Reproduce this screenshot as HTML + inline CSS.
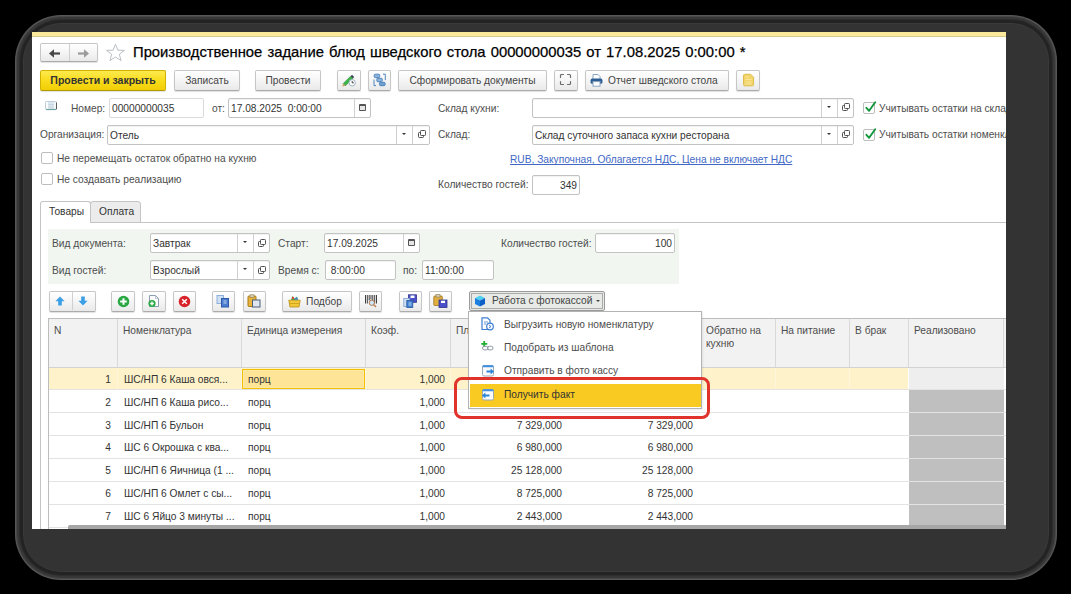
<!DOCTYPE html>
<html><head><meta charset="utf-8">
<style>
*{box-sizing:border-box;margin:0;padding:0}
html,body{width:1071px;height:594px;background:#000;overflow:hidden;font-family:"Liberation Sans",sans-serif;font-size:10.2px;color:#4d4d4d}
.a{position:absolute}
#sh1{left:15px;top:15px;width:1042px;height:565px;border-radius:46px;background:#575757}
#sh2{left:16px;top:16px;width:1040px;height:563px;border-radius:45px;background:#484848}
#sh3{left:17px;top:17px;width:1038px;height:561px;border-radius:44px;background:#373737}
#sh4{left:19px;top:19px;width:1034px;height:557px;border-radius:42px;background:#2e2e2e}
#sh5{left:20px;top:20px;width:1032px;height:555px;border-radius:41px;background:#232323}
#sh6{left:23px;top:23px;width:1026px;height:549px;border-radius:38px;background:#3a3a3a}
#sh7{left:24px;top:24px;width:1024px;height:547px;border-radius:37px;background:#333333}
#clip{left:32px;top:32px;width:974px;height:497px;overflow:hidden;background:#fff}
#pg{left:-32px;top:-32px;width:1071px;height:594px}
.t{position:absolute;white-space:nowrap;line-height:12px;height:12px;margin-top:0.6px}
.btn{position:absolute;height:21px;top:70px;border:1px solid #c6c6c6;border-bottom-color:#ababab;border-radius:2px;background:linear-gradient(#ffffff,#f4f4f4 55%,#e9e9e9);box-shadow:0 1px 1px rgba(0,0,0,.12);color:#444;text-align:center;line-height:19px;white-space:nowrap}
.inp{position:absolute;height:20px;border:1px solid #c3c3c3;border-radius:2px;background:#fff;box-shadow:inset 0 1px 1px rgba(0,0,0,.06);color:#333;line-height:19px;padding-left:2px;white-space:nowrap;overflow:hidden}
.div{position:absolute;top:0;bottom:0;width:1px;background:#d0d0d0}
.th{position:absolute;white-space:nowrap;line-height:12.5px;color:#4d4d4d}
.td{position:absolute;white-space:nowrap;line-height:12px;color:#333}

.dd{position:absolute;width:0;height:0;border-left:2.5px solid transparent;border-right:2.5px solid transparent;border-top:2.5px solid #333}
.op{position:absolute;width:9px;height:8px}
.op:before{content:"";position:absolute;left:3px;top:0;width:5px;height:5px;border:1px solid #606060;border-radius:1px;background:#fff}
.op:after{content:"";position:absolute;left:0;top:3px;width:5px;height:5px;border:1px solid #606060;border-radius:1px;border-top-color:transparent;border-right-color:transparent}
.cal{position:absolute;width:7px;height:7px;border:1px solid #555;border-top-width:2px;border-radius:1px;background:#e6e6e6}
.mi{position:absolute;left:504px;white-space:nowrap;line-height:12px;color:#4d4d4d}
.cb{position:absolute;width:12px;height:12px;border:1px solid #bdbdbd;border-radius:2px;background:#fff}
</style></head><body>
<div class="a" id="sh1"></div>
<div class="a" id="sh2"></div>
<div class="a" id="sh3"></div>
<div class="a" id="sh4"></div>
<div class="a" id="sh5"></div>
<div class="a" id="sh6"></div>
<div class="a" id="sh7"></div>
<div class="a" id="clip"><div class="a" id="pg">
  <!-- top yellow band -->
  <div class="a" style="left:0;top:32px;width:1071px;height:5px;background:linear-gradient(#fbe99c 0,#fbe99c 78%,#d8ca8a 82%,#d8ca8a 100%)"></div>

  <!-- nav -->
  <div class="btn" style="left:40px;top:43px;width:58px;height:19px"></div>
  <div class="a" style="left:69px;top:44px;width:1px;height:17px;background:#d0d0d0"></div>
  <!-- star -->
  <!-- title -->
  <div class="t" style="left:133px;top:42.5px;font-size:14.8px;word-spacing:1px;line-height:18px;height:18px;color:#000;-webkit-text-stroke:0.25px #000">Производственное задание блюд шведского стола 00000000035 от 17.08.2025 0:00:00 *</div>

  <!-- command bar -->
  <div class="btn" style="left:40px;width:126px;background:linear-gradient(#fde94f,#f9dc1c 50%,#f1ce07);border-color:#d0b200;border-bottom-color:#b39a00;color:#333;font-weight:bold;font-size:10.5px">Провести и закрыть</div>
  <div class="btn" style="left:174px;width:66px">Записать</div>
  <div class="btn" style="left:255px;width:66px">Провести</div>
  <div class="btn" style="left:337px;width:24px"></div>
  <div class="btn" style="left:368px;width:23px"></div>
  <div class="btn" style="left:398px;width:149px">Сформировать документы</div>
  <div class="btn" style="left:554px;width:24px"></div>
  <div class="btn" style="left:585px;width:144px;padding-left:22px;text-align:left">Отчет шведского стола</div>
  <div class="btn" style="left:736px;width:24px"></div>

  <!-- row Номер -->
  <div class="t" style="left:71px;top:102.2px">Номер:</div>
  <div class="inp" style="left:109px;top:98px;width:95px;border-color:#dadada;box-shadow:none">00000000035</div>
  <div class="t" style="left:212px;top:102.2px">от:</div>
  <div class="inp" style="left:228px;top:98px;width:143px">17.08.2025&nbsp; 0:00:00<div class="div" style="left:125px"></div></div>
  <div class="t" style="left:438px;top:102.2px">Склад кухни:</div>
  <div class="inp" style="left:532px;top:98px;width:322px"><div class="div" style="left:288px"></div><div class="div" style="left:304px"></div></div>
  <div class="cb" style="left:863px;top:102px"></div>
  <div class="t" style="left:879px;top:102.2px">Учитывать остатки на складе кухни</div>

  <!-- row Организация -->
  <div class="t" style="left:40px;top:128.4px">Организация:</div>
  <div class="inp" style="left:107px;top:125px;width:323px">Отель<div class="div" style="left:288px"></div><div class="div" style="left:304px"></div></div>
  <div class="t" style="left:438px;top:128.4px">Склад:</div>
  <div class="inp" style="left:532px;top:125px;width:322px">Склад суточного запаса кухни ресторана<div class="div" style="left:288px"></div><div class="div" style="left:304px"></div></div>
  <div class="cb" style="left:863px;top:129px"></div>
  <div class="t" style="left:879px;top:128.4px">Учитывать остатки номенклатуры</div>

  <!-- checkboxes -->
  <div class="cb" style="left:41px;top:152px"></div>
  <div class="t" style="left:57px;top:152.5px">Не перемещать остаток обратно на кухню</div>
  <div class="cb" style="left:41px;top:173px"></div>
  <div class="t" style="left:57px;top:173px">Не создавать реализацию</div>
  <div class="t" style="left:510px;top:153.5px;color:#4168c6;text-decoration:underline;text-decoration-skip-ink:none">RUB, Закупочная, Облагается НДС, Цена не включает НДС</div>

  <div class="t" style="left:438px;top:178.5px">Количество гостей:</div>
  <div class="inp" style="left:532px;top:175px;width:48px;text-align:right;padding-right:2px">349</div>

  <!-- tabs -->
  <div class="a" style="left:40px;top:222px;width:1000px;height:1px;background:#c4c4c4"></div>
  <div class="a" style="left:40px;top:222px;width:1px;height:320px;background:#c4c4c4"></div>
  <div class="a" style="left:90px;top:201px;width:51px;height:22px;border:1px solid #c4c4c4;border-radius:3px 3px 0 0;background:#ececec"></div>
  <div class="a" style="left:40px;top:201px;width:51px;height:22px;border:1px solid #c4c4c4;border-bottom:none;border-radius:3px 3px 0 0;background:#fff"></div>
  <div class="t" style="left:49px;top:205px;color:#333">Товары</div>
  <div class="t" style="left:99px;top:205px;color:#333">Оплата</div>

  <!-- green panel -->
  <div class="a" style="left:48px;top:229px;width:631px;height:55px;background:#f1f6f1"></div>
  <div class="t" style="left:52px;top:237px">Вид документа:</div>
  <div class="inp" style="left:150px;top:233px;width:120px">Завтрак<div class="div" style="left:86px"></div><div class="div" style="left:102px"></div></div>
  <div class="t" style="left:278px;top:237px">Старт:</div>
  <div class="inp" style="left:324px;top:233px;width:96px">17.09.2025<div class="div" style="left:78px"></div></div>
  <div class="t" style="left:501px;top:237px">Количество гостей:</div>
  <div class="inp" style="left:595px;top:233px;width:80px;text-align:right;padding-right:2px">100</div>
  <div class="t" style="left:52px;top:264px">Вид гостей:</div>
  <div class="inp" style="left:150px;top:260px;width:120px">Взрослый<div class="div" style="left:86px"></div><div class="div" style="left:102px"></div></div>
  <div class="t" style="left:278px;top:264px">Время с:</div>
  <div class="inp" style="left:325px;top:260px;width:71px">&nbsp;8:00:00</div>
  <div class="t" style="left:403px;top:264px">по:</div>
  <div class="inp" style="left:422px;top:260px;width:72px">11:00:00</div>

  <!-- toolbar -->
  <div class="btn" style="top:291px;left:49px;width:47px"></div>
  <div class="a" style="left:72px;top:292px;width:1px;height:18px;background:#d0d0d0"></div>
  <div class="btn" style="top:291px;left:111px;width:24px"></div>
  <div class="btn" style="top:291px;left:142px;width:24px"></div>
  <div class="btn" style="top:291px;left:173px;width:23px"></div>
  <div class="btn" style="top:291px;left:212px;width:23px"></div>
  <div class="btn" style="top:291px;left:243px;width:23px"></div>
  <div class="btn" style="top:291px;left:282px;width:70px;padding-left:14px">Подбор</div>
  <div class="btn" style="top:291px;left:359px;width:23px"></div>
  <div class="btn" style="top:291px;left:399px;width:23px"></div>
  <div class="btn" style="top:291px;left:429px;width:23px"></div>
  <div class="btn" style="top:291px;left:469px;width:136px;height:20px;border-color:#9a9a9a;background:#e7eae7;box-shadow:none;text-align:left;padding-left:22px;line-height:18px"><div class="a" style="left:1px;top:1px;right:1px;bottom:1px;border:1px solid #a9aba9"></div>Работа с фотокассой<div class="dd" style="left:126px;top:8px;border-top-color:#444"></div></div>

  <!-- table -->
<!--TABLE-->
<div class="a" style="left:49px;top:319px;width:960px;height:48px;background:#f2f2f2"></div>
<div class="a" style="left:48px;top:318px;width:960px;height:1px;background:#bdbdbd"></div>
<div class="a" style="left:48px;top:318px;width:1px;height:220px;background:#bdbdbd"></div>
<div class="a" style="left:49px;top:367px;width:960px;height:1px;background:#d2d2d2"></div>
<div class="a" style="left:117px;top:319px;width:1px;height:48px;background:#d9d9d9"></div>
<div class="a" style="left:241px;top:319px;width:1px;height:48px;background:#d9d9d9"></div>
<div class="a" style="left:365px;top:319px;width:1px;height:48px;background:#d9d9d9"></div>
<div class="a" style="left:450px;top:319px;width:1px;height:48px;background:#d9d9d9"></div>
<div class="a" style="left:568px;top:319px;width:1px;height:48px;background:#d9d9d9"></div>
<div class="a" style="left:700px;top:319px;width:1px;height:48px;background:#d9d9d9"></div>
<div class="a" style="left:775px;top:319px;width:1px;height:48px;background:#d9d9d9"></div>
<div class="a" style="left:849px;top:319px;width:1px;height:48px;background:#d9d9d9"></div>
<div class="a" style="left:908px;top:319px;width:1px;height:48px;background:#d9d9d9"></div>
<div class="a" style="left:1003px;top:319px;width:1px;height:48px;background:#d9d9d9"></div>
<div class="th" style="left:54px;top:325px">N</div>
<div class="th" style="left:123px;top:325px">Номенклатура</div>
<div class="th" style="left:247px;top:325px">Единица измерения</div>
<div class="th" style="left:371px;top:325px">Коэф.</div>
<div class="th" style="left:456px;top:325px">План</div>
<div class="th" style="left:574px;top:325px">Факт</div>
<div class="th" style="left:706px;top:325px">Обратно на<br>кухню</div>
<div class="th" style="left:781px;top:325px">На питание</div>
<div class="th" style="left:855px;top:325px">В брак</div>
<div class="th" style="left:914px;top:325px">Реализовано</div>
<div class="a" style="left:49px;top:368px;width:859px;height:21px;background:#fdf2c9"></div>
<div class="a" style="left:117px;top:368px;width:1px;height:21px;background:#fff6dc"></div>
<div class="a" style="left:241px;top:368px;width:1px;height:21px;background:#fff6dc"></div>
<div class="a" style="left:365px;top:368px;width:1px;height:21px;background:#fff6dc"></div>
<div class="a" style="left:450px;top:368px;width:1px;height:21px;background:#fff6dc"></div>
<div class="a" style="left:568px;top:368px;width:1px;height:21px;background:#fff6dc"></div>
<div class="a" style="left:700px;top:368px;width:1px;height:21px;background:#fff6dc"></div>
<div class="a" style="left:775px;top:368px;width:1px;height:21px;background:#fff6dc"></div>
<div class="a" style="left:849px;top:368px;width:1px;height:21px;background:#fff6dc"></div>
<div class="a" style="left:909px;top:368px;width:95px;height:21px;background:#eeeeee"></div>
<div class="a" style="left:242px;top:368.5px;width:123px;height:20px;background:#fde497;border:1px solid #f5bf00;box-shadow:inset 0 0 0 1px #fbe9a8"></div>
<div class="a" style="left:49px;top:389.00px;width:960px;height:1px;background:#e3e3e3"></div>
<div class="td r" style="right:960px;top:374.0px">1</div>
<div class="td" style="left:124px;top:374.0px">ШС/НП 6 Каша овся...</div>
<div class="td" style="left:248px;top:374.0px">порц</div>
<div class="td r" style="right:626px;top:374.0px">1,000</div>
<div class="a" style="left:909px;top:390.00px;width:95px;height:22px;background:#bfbfbf"></div>
<div class="a" style="left:49px;top:411.95px;width:960px;height:1px;background:#e3e3e3"></div>
<div class="td r" style="right:960px;top:396.75px">2</div>
<div class="td" style="left:124px;top:396.75px">ШС/НП 6 Каша рисо...</div>
<div class="td" style="left:248px;top:396.75px">порц</div>
<div class="td r" style="right:626px;top:396.75px">1,000</div>
<div class="a" style="left:909px;top:412.95px;width:95px;height:22px;background:#bfbfbf"></div>
<div class="a" style="left:49px;top:434.90px;width:960px;height:1px;background:#e3e3e3"></div>
<div class="td r" style="right:960px;top:419.5px">3</div>
<div class="td" style="left:124px;top:419.5px">ШС/НП 6 Бульон</div>
<div class="td" style="left:248px;top:419.5px">порц</div>
<div class="td r" style="right:626px;top:419.5px">1,000</div>
<div class="td r" style="right:509px;top:419.5px">7 329,000</div>
<div class="td r" style="right:378px;top:419.5px">7 329,000</div>
<div class="a" style="left:909px;top:435.90px;width:95px;height:22px;background:#bfbfbf"></div>
<div class="a" style="left:49px;top:457.85px;width:960px;height:1px;background:#e3e3e3"></div>
<div class="td r" style="right:960px;top:442.25px">4</div>
<div class="td" style="left:124px;top:442.25px">ШС 6 Окрошка с ква...</div>
<div class="td" style="left:248px;top:442.25px">порц</div>
<div class="td r" style="right:626px;top:442.25px">1,000</div>
<div class="td r" style="right:509px;top:442.25px">6 980,000</div>
<div class="td r" style="right:378px;top:442.25px">6 980,000</div>
<div class="a" style="left:909px;top:458.85px;width:95px;height:22px;background:#bfbfbf"></div>
<div class="a" style="left:49px;top:480.80px;width:960px;height:1px;background:#e3e3e3"></div>
<div class="td r" style="right:960px;top:465.0px">5</div>
<div class="td" style="left:124px;top:465.0px">ШС/НП 6 Яичница (1 ...</div>
<div class="td" style="left:248px;top:465.0px">порц</div>
<div class="td r" style="right:626px;top:465.0px">1,000</div>
<div class="td r" style="right:509px;top:465.0px">25 128,000</div>
<div class="td r" style="right:378px;top:465.0px">25 128,000</div>
<div class="a" style="left:909px;top:481.80px;width:95px;height:22px;background:#bfbfbf"></div>
<div class="a" style="left:49px;top:503.75px;width:960px;height:1px;background:#e3e3e3"></div>
<div class="td r" style="right:960px;top:487.75px">6</div>
<div class="td" style="left:124px;top:487.75px">ШС/НП 6 Омлет с сы...</div>
<div class="td" style="left:248px;top:487.75px">порц</div>
<div class="td r" style="right:626px;top:487.75px">1,000</div>
<div class="td r" style="right:509px;top:487.75px">8 725,000</div>
<div class="td r" style="right:378px;top:487.75px">8 725,000</div>
<div class="a" style="left:909px;top:504.75px;width:95px;height:22px;background:#bfbfbf"></div>
<div class="a" style="left:49px;top:526.70px;width:960px;height:1px;background:#e3e3e3"></div>
<div class="td r" style="right:960px;top:510.5px">7</div>
<div class="td" style="left:124px;top:510.5px">ШС 6 Яйцо 3 минуты ...</div>
<div class="td" style="left:248px;top:510.5px">порц</div>
<div class="td r" style="right:626px;top:510.5px">1,000</div>
<div class="td r" style="right:509px;top:510.5px">2 443,000</div>
<div class="td r" style="right:378px;top:510.5px">2 443,000</div>

<!--/TABLE-->





<div class="dd" style="left:826.5px;top:105.5px"></div>
<svg class="a" style="left:842px;top:103px" width="8" height="8" viewBox="0 0 8 8" fill="none" stroke="#505050" stroke-width="1"><rect x="2.5" y="0.5" width="5" height="5" rx="0.8"/><path d="M2 2.5 H1.3 Q0.5 2.5 0.5 3.3 V6.7 Q0.5 7.5 1.3 7.5 H4.7 Q5.5 7.5 5.5 6.7 V6"/></svg>
<div class="dd" style="left:826.5px;top:132.5px"></div>
<svg class="a" style="left:842px;top:130px" width="8" height="8" viewBox="0 0 8 8" fill="none" stroke="#505050" stroke-width="1"><rect x="2.5" y="0.5" width="5" height="5" rx="0.8"/><path d="M2 2.5 H1.3 Q0.5 2.5 0.5 3.3 V6.7 Q0.5 7.5 1.3 7.5 H4.7 Q5.5 7.5 5.5 6.7 V6"/></svg>
<div class="dd" style="left:402px;top:132.5px"></div>
<svg class="a" style="left:417.5px;top:130px" width="8" height="8" viewBox="0 0 8 8" fill="none" stroke="#505050" stroke-width="1"><rect x="2.5" y="0.5" width="5" height="5" rx="0.8"/><path d="M2 2.5 H1.3 Q0.5 2.5 0.5 3.3 V6.7 Q0.5 7.5 1.3 7.5 H4.7 Q5.5 7.5 5.5 6.7 V6"/></svg>
<div class="dd" style="left:242.5px;top:240.5px"></div>
<svg class="a" style="left:258px;top:238.5px" width="8" height="8" viewBox="0 0 8 8" fill="none" stroke="#505050" stroke-width="1"><rect x="2.5" y="0.5" width="5" height="5" rx="0.8"/><path d="M2 2.5 H1.3 Q0.5 2.5 0.5 3.3 V6.7 Q0.5 7.5 1.3 7.5 H4.7 Q5.5 7.5 5.5 6.7 V6"/></svg>
<div class="dd" style="left:242.5px;top:267.5px"></div>
<svg class="a" style="left:258px;top:265.5px" width="8" height="8" viewBox="0 0 8 8" fill="none" stroke="#505050" stroke-width="1"><rect x="2.5" y="0.5" width="5" height="5" rx="0.8"/><path d="M2 2.5 H1.3 Q0.5 2.5 0.5 3.3 V6.7 Q0.5 7.5 1.3 7.5 H4.7 Q5.5 7.5 5.5 6.7 V6"/></svg>
<div class="cal" style="left:359px;top:104px"></div>
<div class="cal" style="left:408px;top:239px"></div>
<svg class="a" style="left:864px;top:100px" width="14" height="14" viewBox="0 0 14 14"><path d="M2.4 7.8 L5.1 10.8 L11.2 2.2" fill="none" stroke="#12963c" stroke-width="1.9" stroke-linecap="round" stroke-linejoin="round"/></svg>
<svg class="a" style="left:864px;top:127px" width="14" height="14" viewBox="0 0 14 14"><path d="M2.4 7.8 L5.1 10.8 L11.2 2.2" fill="none" stroke="#12963c" stroke-width="1.9" stroke-linecap="round" stroke-linejoin="round"/></svg>
<svg class="a" style="left:48px;top:47.5px" width="14" height="11" viewBox="0 0 14 11"><path d="M12 5.5 H4" stroke="#474747" stroke-width="2.2"/><path d="M1 5.5 L6 1.2 V9.8 Z" fill="#474747"/></svg>
<svg class="a" style="left:76px;top:47.5px" width="14" height="11" viewBox="0 0 14 11"><path d="M2 5.5 H10" stroke="#9b9b9b" stroke-width="2.2"/><path d="M13 5.5 L8 1.2 V9.8 Z" fill="#9b9b9b"/></svg>
<svg class="a" style="left:105px;top:43px" width="21" height="19" viewBox="0 0 21 19"><path d="M10.5 1.2 L12.9 7.2 L19.4 7.4 L14.3 11.3 L16.1 17.6 L10.5 14 L4.9 17.6 L6.7 11.3 L1.6 7.4 L8.1 7.2 Z" fill="none" stroke="#b9bec4" stroke-width="1"/></svg>
<svg class="a" style="left:340px;top:72px" width="18" height="16" viewBox="0 0 18 16">
<path d="M3.2 11.6 L10.6 4.2 L12.8 6.4 L5.4 13.8 Z" fill="#3cb54a" stroke="#2f8a3a" stroke-width=".6"/>
<path d="M10.6 4.2 L12 2.8 L14.2 5 L12.8 6.4 Z" fill="#3b4656"/>
<path d="M3.2 11.6 L5.4 13.8 L2.2 14.6 Z" fill="#c8a060"/>
<circle cx="12.2" cy="10.8" r="3.2" fill="#fff" stroke="#9fb2c4" stroke-width="1"/>
<path d="M12.2 9 V10.9 H13.8" fill="none" stroke="#333" stroke-width=".9"/>
</svg>
<svg class="a" style="left:373px;top:73px" width="14" height="14" viewBox="0 0 14 14">
<rect x="1.2" y="1.2" width="5.5" height="3.4" rx="1" fill="#8fb6da" stroke="#4f86bf" stroke-width="1"/>
<rect x="3.8" y="5.3" width="5.5" height="3.4" rx="1" fill="#8fb6da" stroke="#4f86bf" stroke-width="1"/>
<rect x="6.5" y="9.3" width="5.6" height="3.4" rx="1" fill="#6e9fcf" stroke="#4f86bf" stroke-width="1"/>
<path d="M1 6.5 V12.6 H3" fill="none" stroke="#4f86bf" stroke-width="1"/>
<path d="M10 1.2 H12.3 V7.2" fill="none" stroke="#4f86bf" stroke-width="1"/>
</svg>
<svg class="a" style="left:559px;top:73px" width="13" height="13" viewBox="0 0 13 13" fill="none" stroke="#6e6e6e" stroke-width="1.2" stroke-linecap="round">
<path d="M1.5 4.5 V2.5 Q1.5 1.5 2.5 1.5 H4.5"/><path d="M8.5 1.5 H10.5 Q11.5 1.5 11.5 2.5 V4.5"/>
<path d="M11.5 8.5 V10.5 Q11.5 11.5 10.5 11.5 H8.5"/><path d="M4.5 11.5 H2.5 Q1.5 11.5 1.5 10.5 V8.5"/>
</svg>
<svg class="a" style="left:590px;top:73px" width="13" height="14" viewBox="0 0 13 14">
<path d="M3 6 V1.5 H8 L10 3.5 V6" fill="#fff" stroke="#8aa4bf" stroke-width="1"/>
<rect x="0.6" y="5.6" width="11.8" height="5.2" rx="1.6" fill="#2d5f95"/>
<rect x="3" y="8.6" width="7" height="4.6" fill="#fff" stroke="#8aa4bf" stroke-width="1"/>
</svg>
<svg class="a" style="left:742px;top:73px" width="13" height="14" viewBox="0 0 13 14">
<path d="M1.5 2.5 Q1.5 1.3 2.7 1.3 H8.6 L11.6 4.3 V11.6 Q11.6 12.8 10.4 12.8 H2.7 Q1.5 12.8 1.5 11.6 Z" fill="#f2d56a" stroke="#dcbc4c" stroke-width="1"/>
<path d="M3.5 4 H7 M3.5 6.5 H9.5 M3.5 9 H9.5 M3.5 11 H9.5" stroke="#fbe9a8" stroke-width=".8"/>
</svg>
<svg class="a" style="left:45px;top:101px" width="13" height="10" viewBox="0 0 13 10">
<rect x="0.5" y="0.5" width="11" height="8" rx="1" fill="#dde7ef" stroke="#bfcddb" stroke-width="1"/>
<rect x="1" y="1" width="2" height="7.5" fill="#fafcfd"/><rect x="9" y="1" width="2" height="7" fill="#f5f8fb"/>
<path d="M3.5 3.5 H9 M3.5 6 H9" stroke="#c3cfda" stroke-width=".8"/>
<path d="M1 8.5 H11" stroke="#6fa2a2" stroke-width="1.2"/><path d="M11.5 1.5 V8.3" stroke="#5c5c5c" stroke-width="1"/>
</svg>
<svg class="a" style="left:55px;top:296px" width="10" height="10" viewBox="0 0 10 10"><path d="M5 0.5 L9.6 5.2 H6.8 V9.6 H3.2 V5.2 H0.4 Z" fill="#3b9fe6"/></svg>
<svg class="a" style="left:78px;top:296px" width="10" height="10" viewBox="0 0 10 10"><path d="M5 9.5 L9.6 4.8 H6.8 V0.4 H3.2 V4.8 H0.4 Z" fill="#3b9fe6"/></svg>
<svg class="a" style="left:117px;top:294.5px" width="13" height="13" viewBox="0 0 13 13"><circle cx="6.5" cy="6.5" r="5.8" fill="#2aa844"/><path d="M6.5 3.2 V9.8 M3.2 6.5 H9.8" stroke="#fff" stroke-width="2"/></svg>
<svg class="a" style="left:147px;top:294px" width="14" height="14" viewBox="0 0 14 14">
<path d="M2.5 1.5 H8.5 L11.5 4.5 V12.5 H2.5 Z" fill="#fff" stroke="#8d9cb0" stroke-width="1"/><path d="M8.5 1.5 V4.5 H11.5" fill="none" stroke="#a8b4c4" stroke-width=".8"/>
<circle cx="5" cy="9.5" r="3.6" fill="#2aa844"/><path d="M5 7.6 V11.4 M3.1 9.5 H6.9" stroke="#fff" stroke-width="1.3"/></svg>
<svg class="a" style="left:178px;top:294.5px" width="13" height="13" viewBox="0 0 13 13"><circle cx="6.5" cy="6.5" r="5.8" fill="#d9232a"/><path d="M4.2 4.2 L8.8 8.8 M8.8 4.2 L4.2 8.8" stroke="#fff" stroke-width="1.5"/></svg>
<svg class="a" style="left:216px;top:294px" width="15" height="14" viewBox="0 0 15 14">
<rect x="1" y="1.5" width="6.5" height="8" fill="#cfe0f4" stroke="#8fb0d8" stroke-width="1"/>
<rect x="5.5" y="4.5" width="7" height="8.5" fill="#4d7fd0" stroke="#2f5aa8" stroke-width="1"/>
<path d="M7.5 7 H10.5 M7.5 9 H10.5" stroke="#dfe9f8" stroke-width=".8"/></svg>
<svg class="a" style="left:247px;top:294px" width="15" height="14" viewBox="0 0 15 14">
<rect x="1" y="2" width="8" height="10.5" rx="1" fill="#e8b53a" stroke="#a87a1a" stroke-width="1"/>
<rect x="3" y="0.8" width="4" height="2.5" fill="#d8d0b0" stroke="#8a7a50" stroke-width=".6"/>
<rect x="5.5" y="6" width="7.5" height="7" fill="#dfe6f0" stroke="#4a5f7c" stroke-width="1"/></svg>
<svg class="a" style="left:288px;top:294.5px" width="13" height="13" viewBox="0 0 13 13">
<path d="M3 5 L4.5 1 L6.5 3.5 L9 1.5 L10 5 Z" fill="#3aa85a"/><circle cx="8.5" cy="4" r="1.6" fill="#4b8fd6"/><circle cx="5" cy="3" r="1.2" fill="#e24a3a"/>
<path d="M0.8 5.2 H12.2 L11 12 H2 Z" fill="#f1c83a" stroke="#b88a10" stroke-width=".8"/><path d="M1.5 8.5 H11.5" stroke="#c89a18" stroke-width=".8"/></svg>
<svg class="a" style="left:364px;top:294px" width="14" height="14" viewBox="0 0 14 14">
<path d="M1.5 1 V9.5 M3.3 1 V9.5 M5.2 1 V6.5 M7 1 V5.5 M8.8 1 V6.5 M10.7 1 V9.5 M12.5 1 V9.5" stroke="#2a2a2a" stroke-width=".9"/>
<circle cx="7.8" cy="8.8" r="2.6" fill="#cfe6f8" stroke="#b07a50" stroke-width="1"/><path d="M9.8 10.8 L12 13" stroke="#c08050" stroke-width="1.6"/></svg>
<svg class="a" style="left:403px;top:294px" width="15" height="14" viewBox="0 0 15 14">
<rect x="5.5" y="0.8" width="8" height="7.5" fill="#4a4fc8" stroke="#30348a" stroke-width=".8"/><rect x="7.5" y="1.5" width="4" height="2.5" fill="#fff"/>
<rect x="0.8" y="4.5" width="6" height="8" fill="#cfe0f4" stroke="#7fa0d0" stroke-width=".8"/>
<rect x="3.8" y="6.5" width="6" height="7" fill="#3f7fd0" stroke="#2a58a0" stroke-width=".8"/><path d="M5.5 9 H8.5 M5.5 11 H8.5" stroke="#e0ecfa" stroke-width=".8"/></svg>
<svg class="a" style="left:433px;top:294px" width="15" height="14" viewBox="0 0 15 14">
<rect x="0.8" y="2" width="8.5" height="9.5" rx="1" fill="#e2b040" stroke="#9a7218" stroke-width=".8"/>
<rect x="3" y="0.6" width="4" height="2.5" fill="#d8d0b0" stroke="#8a7a50" stroke-width=".6"/>
<rect x="6" y="6" width="8" height="7.5" fill="#4a4fc8" stroke="#30348a" stroke-width=".8"/><rect x="8" y="6.7" width="4" height="2.3" fill="#fff"/></svg>
<svg class="a" style="left:474px;top:294.5px" width="12" height="12" viewBox="0 0 12 12">
<path d="M6 0.5 L11 3 L6 5.5 L1 3 Z" fill="#4fd0f0"/><path d="M1 3 L6 5.5 V11.5 L1 9 Z" fill="#1a7fe0"/><path d="M11 3 L6 5.5 V11.5 L11 9 Z" fill="#0f5fc8"/></svg>
<div class="a" style="left:468px;top:311px;width:234px;height:98px;border:1px solid #b3b3b3;background:#fff;box-shadow:1px 1px 2px rgba(0,0,0,.08)"></div>
<div class="a" style="left:470px;top:383.5px;width:231px;height:23px;background:#f8ca22"></div>
<div class="mi" style="top:318.5px">Выгрузить новую номенклатуру</div>
<div class="mi" style="top:341.5px">Подобрать из шаблона</div>
<div class="mi" style="top:365px">Отправить в фото кассу</div>
<div class="mi" style="top:388.5px;color:#333">Получить факт</div>
<svg class="a" style="left:480px;top:317px" width="15" height="14" viewBox="0 0 15 14">
<path d="M2 0.8 H7.5 L10 3.3 V12.5 H2 Z" fill="#fff" stroke="#3f7fd0" stroke-width="1.2"/><path d="M4 5 H8 M4 7 H6" stroke="#3f7fd0" stroke-width=".8"/>
<circle cx="10" cy="9.5" r="3.3" fill="#fff" stroke="#3f7fd0" stroke-width="1.2"/><path d="M9 8 L11 9.5 L9 11" fill="none" stroke="#3f7fd0" stroke-width="1"/></svg>
<svg class="a" style="left:480px;top:340px" width="15" height="13" viewBox="0 0 15 13">
<path d="M4.2 1 V6.8 M1.3 3.9 H7.3" stroke="#22b033" stroke-width="1.8"/>
<rect x="2.5" y="6.3" width="5.5" height="3.6" rx="1.8" fill="none" stroke="#8d98a4" stroke-width="1"/><rect x="7.5" y="6.3" width="5.5" height="3.6" rx="1.8" fill="none" stroke="#8d98a4" stroke-width="1"/></svg>
<svg class="a" style="left:481px;top:364px" width="14" height="14" viewBox="0 0 14 14">
<rect x="1.5" y="1.5" width="11" height="10.5" rx="1.5" fill="#fbfbfb" stroke="#9aa8b8" stroke-width="1"/><path d="M1.5 2.6 Q1.5 1.2 2.9 1.2 H11.1 Q12.5 1.2 12.5 2.6 V3.3 H1.5 Z" fill="#3d90e2"/>
<path d="M5.5 7.5 H10" stroke="#2a86da" stroke-width="2"/><path d="M13 7.5 L9.6 4.6 V10.4 Z" fill="#2a86da"/></svg>
<svg class="a" style="left:481px;top:388px" width="14" height="14" viewBox="0 0 14 14">
<rect x="1.5" y="1.5" width="11" height="10.5" rx="1.5" fill="#fbfbfb" stroke="#9aa8b8" stroke-width="1"/><path d="M1.5 2.6 Q1.5 1.2 2.9 1.2 H11.1 Q12.5 1.2 12.5 2.6 V3.3 H1.5 Z" fill="#3d90e2"/>
<path d="M4 7.5 H8.5" stroke="#2a86da" stroke-width="2"/><path d="M1 7.5 L4.4 4.6 V10.4 Z" fill="#2a86da"/></svg>
<div class="a" style="left:453.5px;top:376.5px;width:256px;height:42px;border:3.2px solid #e0332b;border-radius:8px"></div>
<!-- scrollbar -->
<div class="a" style="left:68px;top:525px;width:960px;height:5px;background:#a6a6a6;border-radius:2px 0 0 0"></div>
</div></div>
</body></html>
